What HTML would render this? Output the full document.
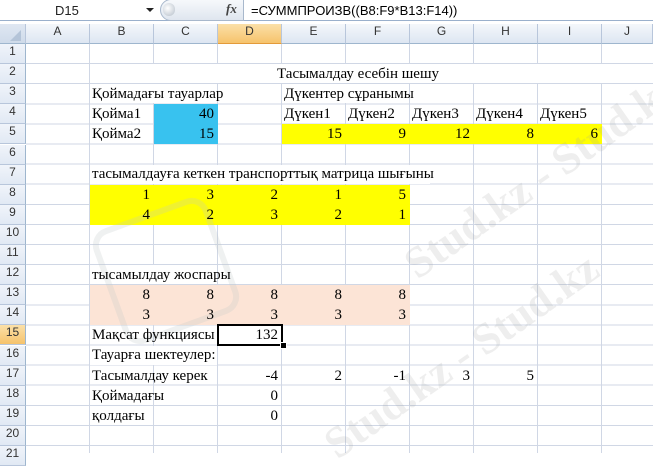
<!DOCTYPE html>
<html><head><meta charset="utf-8"><style>
body{margin:0;width:653px;height:453px;overflow:hidden;background:#fff;position:relative;font-family:"Liberation Serif",serif;}
.a{position:absolute;}
.t{position:absolute;height:20px;line-height:21px;font-size:15px;color:#000;white-space:nowrap;}
.r{text-align:right;width:60px;}
.ch{position:absolute;top:24px;height:20px;line-height:20px;text-align:center;font:12px "Liberation Sans",sans-serif;color:#333;border-right:1px solid #b8c6db;background:linear-gradient(#f4f7fb,#dde6f2);box-sizing:border-box;border-bottom:1px solid #9eb6ce;}
.rh{position:absolute;left:0;width:26px;height:20px;line-height:20px;text-align:center;font:12px "Liberation Sans",sans-serif;color:#333;background:linear-gradient(#f0f4fa,#e1e9f4);border-bottom:1px solid #b8c6db;border-right:1px solid #9eb6ce;box-sizing:border-box;}
</style></head><body>
<div class="a" style="left:0;top:0;width:653px;height:20px;background:#fff;border-bottom:1px solid #9ab0cc"></div>
<div class="a" style="left:0;top:21px;width:653px;height:3px;background:#fff;border-bottom:1px solid #b0c0d8"></div>
<div class="a" style="left:55px;top:3px;font:13px 'Liberation Sans',sans-serif;color:#222">D15</div>
<div class="a" style="left:146px;top:8px;width:0;height:0;border-left:4px solid transparent;border-right:4px solid transparent;border-top:4px solid #222"></div>
<div class="a" style="left:160px;top:-1px;width:82px;height:20px;border:1px solid #a8b8cc;border-radius:11px 0 0 11px;background:linear-gradient(#f6f8fb,#dfe6ef)"></div>
<div class="a" style="left:163px;top:3px;width:12px;height:13px;border-radius:7px;background:radial-gradient(circle at 40% 40%,#fff,#b4bec9)"></div>
<div class="a" style="left:226px;top:1px;font:italic bold 13px 'Liberation Serif',serif;color:#444">fx</div>
<div class="a" style="left:243px;top:0;width:1px;height:20px;background:#a8b8cc"></div>
<div class="a" style="left:251px;top:3px;font:13px 'Liberation Sans',sans-serif;color:#000">=СУММПРОИЗВ((B8:F9*B13:F14))</div>

<div class="a" style="left:26px;top:44px;width:627px;height:409px;
background-image:repeating-linear-gradient(90deg,transparent 0,transparent 63px,#d0d7e5 63px,#d0d7e5 64px),repeating-linear-gradient(180deg,transparent 0,transparent 19.1px,#d0d7e5 19.1px,#d0d7e5 20.1px);"></div>

<div class="a" style="left:154px;top:104px;width:64px;height:40px;background:#38c2ef"></div>
<div class="a" style="left:282px;top:124px;width:320px;height:20px;background:#ffff00"></div>
<div class="a" style="left:90px;top:185px;width:320px;height:40px;background:#ffff00"></div>
<div class="a" style="left:90px;top:285px;width:320px;height:40px;background:#fce4d6"></div>
<div class="a" style="left:90px;top:64px;width:512px;height:19px;background:#fff"></div>
<div class="a" style="left:90px;top:84px;width:127px;height:19px;background:#fff"></div>
<div class="a" style="left:282px;top:84px;width:127px;height:19px;background:#fff"></div>
<div class="a" style="left:90px;top:165px;width:340px;height:19px;background:#fff"></div>
<div class="a" style="left:90px;top:265px;width:127px;height:19px;background:#fff"></div>
<div class="a" style="left:90px;top:346px;width:127px;height:19px;background:#fff"></div>

<div class="a" style="left:380px;top:150px;font:bold 44px 'Liberation Serif',serif;color:rgba(160,160,160,0.18);transform:rotate(-35deg);white-space:nowrap">Stud.kz - Stud.kz</div>
<div class="a" style="left:300px;top:330px;font:bold 44px 'Liberation Serif',serif;color:rgba(160,160,160,0.18);transform:rotate(-35deg);white-space:nowrap">Stud.kz - Stud.kz</div>
<div class="a" style="left:105px;top:210px;width:110px;height:110px;border:6px solid rgba(190,200,200,0.25);border-radius:18px;transform:rotate(-20deg)"></div>

<div class="ch" style="left:0;width:26px;background:linear-gradient(#dfe7f2,#cfdbea)"></div>
<div class="a" style="left:10px;top:30px;width:0;height:0;border-left:11px solid transparent;border-bottom:11px solid #b4c4d8"></div>
<div class="ch" style="left:26px;width:64px">A</div>
<div class="ch" style="left:90px;width:64px">B</div>
<div class="ch" style="left:154px;width:64px">C</div>
<div class="ch" style="left:218px;width:64px;background:linear-gradient(#fbe0a8,#f6c36c);border-bottom:1px solid #e39a3a">D</div>
<div class="ch" style="left:282px;width:64px">E</div>
<div class="ch" style="left:346px;width:64px">F</div>
<div class="ch" style="left:410px;width:64px">G</div>
<div class="ch" style="left:474px;width:64px">H</div>
<div class="ch" style="left:538px;width:64px">I</div>
<div class="ch" style="left:602px;width:51px">J</div>

<div class="rh" style="top:44px">1</div>
<div class="rh" style="top:64.1px">2</div>
<div class="rh" style="top:84.2px">3</div>
<div class="rh" style="top:104.3px">4</div>
<div class="rh" style="top:124.4px">5</div>
<div class="rh" style="top:144.5px">6</div>
<div class="rh" style="top:164.6px">7</div>
<div class="rh" style="top:184.7px">8</div>
<div class="rh" style="top:204.8px">9</div>
<div class="rh" style="top:224.9px">10</div>
<div class="rh" style="top:245px">11</div>
<div class="rh" style="top:265.1px">12</div>
<div class="rh" style="top:285.2px">13</div>
<div class="rh" style="top:305.3px">14</div>
<div class="rh" style="top:325.4px;background:linear-gradient(#fbe0a8,#f6c36c)">15</div>
<div class="rh" style="top:345.5px">16</div>
<div class="rh" style="top:365.6px">17</div>
<div class="rh" style="top:385.7px">18</div>
<div class="rh" style="top:405.8px">19</div>
<div class="rh" style="top:425.9px">20</div>
<div class="rh" style="top:446px">21</div>

<div class="t" style="left:277px;top:64px">Тасымалдау есебін шешу</div>
<div class="t" style="left:92px;top:84px">Қоймадағы тауарлар</div>
<div class="t" style="left:284px;top:84px">Дүкентер сұранымы</div>
<div class="t" style="left:92px;top:104px">Қойма1</div>
<div class="t r" style="left:154px;top:104px">40</div>
<div class="t" style="left:284px;top:104px">Дүкен1</div>
<div class="t" style="left:348px;top:104px">Дүкен2</div>
<div class="t" style="left:412px;top:104px">Дүкен3</div>
<div class="t" style="left:476px;top:104px">Дүкен4</div>
<div class="t" style="left:540px;top:104px">Дүкен5</div>
<div class="t" style="left:92px;top:124px">Қойма2</div>
<div class="t r" style="left:154px;top:124px">15</div>
<div class="t r" style="left:282px;top:124px">15</div>
<div class="t r" style="left:346px;top:124px">9</div>
<div class="t r" style="left:410px;top:124px">12</div>
<div class="t r" style="left:474px;top:124px">8</div>
<div class="t r" style="left:538px;top:124px">6</div>
<div class="t" style="left:92px;top:164px">тасымалдауға кеткен транспорттық матрица шығыны</div>
<div class="t r" style="left:90px;top:185px">1</div>
<div class="t r" style="left:154px;top:185px">3</div>
<div class="t r" style="left:218px;top:185px">2</div>
<div class="t r" style="left:282px;top:185px">1</div>
<div class="t r" style="left:346px;top:185px">5</div>
<div class="t r" style="left:90px;top:205px">4</div>
<div class="t r" style="left:154px;top:205px">2</div>
<div class="t r" style="left:218px;top:205px">3</div>
<div class="t r" style="left:282px;top:205px">2</div>
<div class="t r" style="left:346px;top:205px">1</div>
<div class="t" style="left:92px;top:265px">тысамылдау жоспары</div>
<div class="t r" style="left:90px;top:285px">8</div>
<div class="t r" style="left:154px;top:285px">8</div>
<div class="t r" style="left:218px;top:285px">8</div>
<div class="t r" style="left:282px;top:285px">8</div>
<div class="t r" style="left:346px;top:285px">8</div>
<div class="t r" style="left:90px;top:305px">3</div>
<div class="t r" style="left:154px;top:305px">3</div>
<div class="t r" style="left:218px;top:305px">3</div>
<div class="t r" style="left:282px;top:305px">3</div>
<div class="t r" style="left:346px;top:305px">3</div>
<div class="a" style="left:217px;top:324px;width:62px;height:18px;border:2px solid #000;background:#fff"></div>
<div class="a" style="left:280px;top:342px;width:5px;height:5px;background:#000;border:1px solid #fff"></div>
<div class="t" style="left:92px;top:325px">Мақсат функциясы</div>
<div class="t r" style="left:218px;top:325px">132</div>
<div class="t" style="left:92px;top:345px">Тауарға шектеулер:</div>
<div class="t" style="left:92px;top:366px">Тасымалдау керек</div>
<div class="t r" style="left:218px;top:366px">-4</div>
<div class="t r" style="left:282px;top:366px">2</div>
<div class="t r" style="left:346px;top:366px">-1</div>
<div class="t r" style="left:410px;top:366px">3</div>
<div class="t r" style="left:474px;top:366px">5</div>
<div class="t" style="left:92px;top:386px">Қоймадағы</div>
<div class="t r" style="left:218px;top:386px">0</div>
<div class="t" style="left:92px;top:406px">қолдағы</div>
<div class="t r" style="left:218px;top:406px">0</div>
</body></html>
